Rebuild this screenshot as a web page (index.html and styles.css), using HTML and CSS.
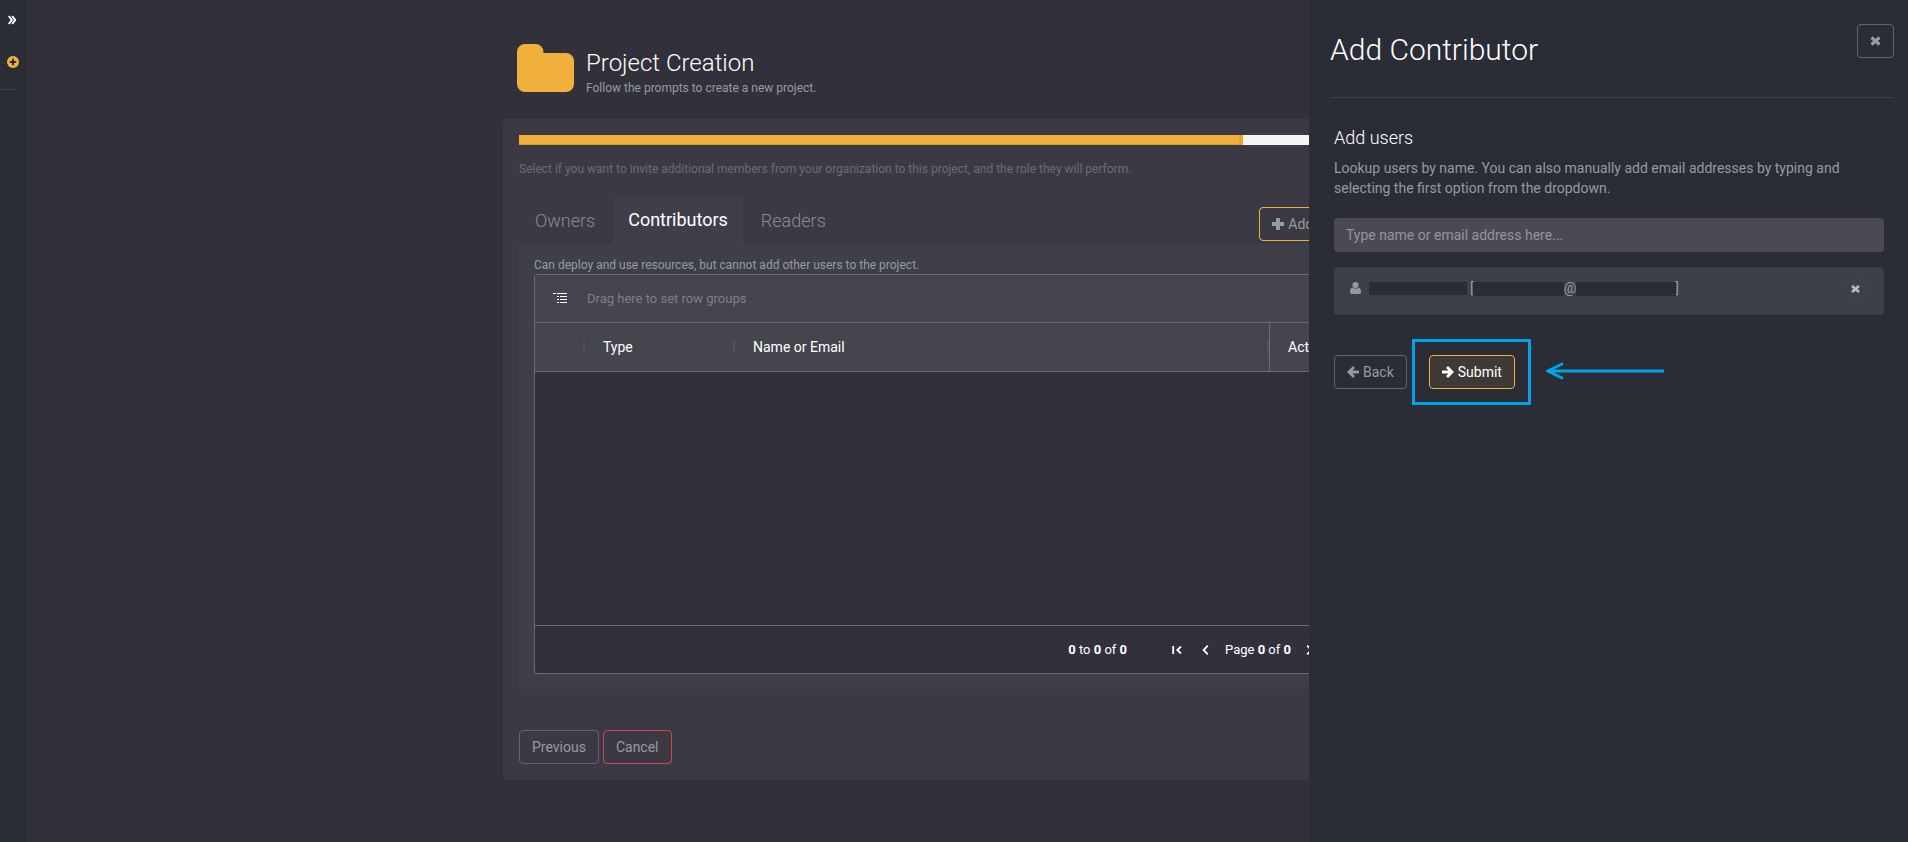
FILE: index.html
```html
<!DOCTYPE html>
<html lang="en">
<head>
<meta charset="utf-8">
<title>Project Creation</title>
<link rel="stylesheet" href="styles.css">
</head>
<body>
<div class="app">
  <nav class="rail" aria-label="Main">
    <button class="rail-btn" type="button" aria-label="Expand menu">
      <svg width="8" height="10" viewBox="0 0 8 10"><path d="M.8 1 3.800 5 .8 9M4.200 1l3 4-3 4" fill="none" stroke="#fff" stroke-width="2"/></svg>
    </button>
    <button class="rail-btn rail-add" type="button" aria-label="New">
      <svg width="12" height="12" viewBox="0 0 12 12"><circle cx="6" cy="6" r="6" fill="#f1b03c"/><path d="M6 2.800v6.400M2.800 6h6.400" stroke="#2a2d35" stroke-width="2"/></svg>
    </button>
    <hr class="rail-line">
  </nav>

  <main class="page">
    <header class="page-head">
      <svg class="folder" width="57" height="48" viewBox="0 0 57 48"><path d="M8 0h10.500a8 8 0 0 1 8 8v1H49a8 8 0 0 1 8 8v23a8 8 0 0 1-8 8H8a8 8 0 0 1-8-8V8a8 8 0 0 1 8-8z" fill="#f1b03c"/></svg>
      <div>
        <h1 class="page-title">Project Creation</h1>
        <p class="small">Follow the prompts to create a new project.</p>
      </div>
    </header>

    <section class="panel">
      <div class="progress" role="progressbar" aria-valuenow="80" aria-valuemin="0" aria-valuemax="100"><div class="progress-bar" style="width:80%"></div></div>
      <p class="small hint">Select if you want to invite additional members from your organization to this project, and the role they will perform.</p>

      <div class="tabs-row">
        <div class="tabs" role="tablist">
          <button class="tab" role="tab" type="button">Owners</button>
          <button class="tab active" role="tab" type="button" aria-selected="true">Contributors</button>
          <button class="tab" role="tab" type="button">Readers</button>
        </div>
        <button class="btn btn-accent" type="button">
          <svg width="12" height="12" viewBox="0 0 12 12"><path d="M6 0v12M0 6h12" stroke="currentColor" stroke-width="4"/></svg>
          Add Contributor
        </button>
      </div>

      <div class="pane" role="tabpanel">
        <p class="small">Can deploy and use resources, but cannot add other users to the project.</p>
        <div class="grid">
          <div class="group-bar">
            <svg width="14" height="11" viewBox="0 0 14 11"><path d="M0 .5h3M4 .5h10M4 3.500h2M7 3.500h7M4 6.500h2M7 6.500h7M4 9.500h2M7 9.500h7" stroke="#fff"/></svg>
            <span>Drag here to set row groups</span>
          </div>
          <table class="grid-table">
            <colgroup><col class="c-check"><col class="c-type"><col><col class="c-act"></colgroup>
            <thead><tr><th></th><th>Type</th><th>Name or Email</th><th class="pinned">Actions</th></tr></thead>
          </table>
          <div class="grid-body"></div>
          <div class="pager">
            <span class="summary"><b>0</b> to <b>0</b> of <b>0</b></span>
            <button class="pg" type="button" aria-label="First page"><svg width="10" height="8" viewBox="0 0 10 8"><path d="M1.200 0v8M9 .5 5.300 4 9 7.500" fill="none" stroke="currentColor" stroke-width="1.800"/></svg></button>
            <button class="pg" type="button" aria-label="Previous page"><svg width="7" height="10" viewBox="0 0 7 10"><path d="M5.800.7 1.600 5l4.200 4.300" fill="none" stroke="currentColor" stroke-width="1.800"/></svg></button>
            <span class="page-no">Page <b>0</b> of <b>0</b></span>
            <button class="pg" type="button" aria-label="Next page"><svg width="7" height="10" viewBox="0 0 7 10"><path d="M1.200.7 5.400 5 1.200 9.300" fill="none" stroke="currentColor" stroke-width="1.800"/></svg></button>
            <button class="pg" type="button" aria-label="Last page"><svg width="10" height="8" viewBox="0 0 10 8"><path d="M8.800 0v8M1 .5 4.700 4 1 7.500" fill="none" stroke="currentColor" stroke-width="1.800"/></svg></button>
          </div>
        </div>
      </div>

      <div class="actions">
        <button class="btn" type="button">Previous</button>
        <button class="btn btn-danger" type="button">Cancel</button>
      </div>
    </section>
  </main>
</div>

<aside class="drawer" aria-label="Add Contributor">
  <header class="drawer-head">
    <h2 class="drawer-title">Add Contributor</h2>
    <button class="btn" type="button" aria-label="Close">
      <svg width="11" height="10" viewBox="0 0 11 10"><path d="M1.500 1.500l8 7M9.500 1.500l-8 7" stroke="currentColor" stroke-width="3.200"/></svg>
    </button>
  </header>
  <form class="drawer-body">
    <label class="field-title" for="user">Add users</label>
    <p class="help">Lookup users by name. You can also manually add email addresses by typing and selecting the first option from the dropdown.</p>
    <input class="text-input" id="user" type="text" placeholder="Type name or email address here...">
    <div class="user-card">
      <svg class="user-icon" width="11" height="12" viewBox="0 0 11 12"><path d="M5.500 0a3 3 0 0 1 0 6.200 3 3 0 0 1 0-6.200zM2.600 5.400a4.200 4.200 0 0 0 5.800 0C10.400 5.600 11 7.500 11 9.700 11 11.200 10.200 12 9 12H2C.8 12 0 11.200 0 9.700c0-2.200.6-4.100 2.600-4.300z" fill="#9398a0"/></svg>
      <span class="mask mask-name"></span><span>[</span><span class="mask mask-local"></span><span>@</span><span class="mask mask-host"></span><span>]</span>
      <button class="remove" type="button" aria-label="Remove user">
        <svg width="9" height="8" viewBox="0 0 9 8"><path d="M1 1l7 6M8 1 1 7" stroke="#b4b7bb" stroke-width="2.800"/></svg>
      </button>
    </div>
    <div class="drawer-actions">
      <button class="btn" type="button">
        <svg width="12" height="12" viewBox="0 0 12 12"><path d="M12 6H2.500M7 1 2 6l5 5" fill="none" stroke="currentColor" stroke-width="2.800"/></svg>
        Back
      </button>
      <div class="submit-wrap">
        <button class="btn btn-submit" type="button">
          <svg width="12" height="12" viewBox="0 0 12 12"><path d="M0 6h9.500M5 1l5 5-5 5" fill="none" stroke="currentColor" stroke-width="2.800"/></svg>
          Submit
        </button>
        <span class="callout-box"></span>
        <svg class="callout-arrow" width="118" height="18" viewBox="0 0 118 18"><path d="M118 9H2M17 1.500 2 9l15 7.500" fill="none" stroke="#00a2e8" stroke-width="3"/></svg>
      </div>
    </div>
  </form>
</aside>
</body>
</html>
```

FILE: styles.css
```css
* { box-sizing: border-box; }

body {
  margin: 0;
  background: #32313b;
  color: #949ba2;
  font: 14px/20px Roboto, "Liberation Sans", sans-serif;
}

h1, h2, p { margin: 0; font-weight: 400; }
button, input { font: inherit; color: inherit; }
button { cursor: pointer; }
svg { display: block; flex: none; }

.app { display: flex; min-height: 100vh; }

.rail { width: 27px; background: #2a2d35; padding-top: 15px; }
.rail-btn { display: block; margin: 0 0 31px 8px; padding: 0; border: 0; background: none; }
.rail-add { margin-left: 7px; margin-bottom: 21px; }
.rail-line { width: 17px; margin: 0; border: 0; border-top: 1px solid #3f424a; }

.page { flex: 1; padding: 44px 24px 60px 32px; max-width: 993px; margin: 0 auto; }
.page-head { display: flex; gap: 12px; padding-left: 14px; height: 75px; }
.page-title { font-size: 24px; line-height: 32px; font-weight: 300; color: #fff; padding-top: 3px; }
.small { font-size: 12px; line-height: 18px; }

.panel { background: #3b3a44; border-radius: 3px; padding: 16px; }
.progress { height: 10px; background: #f5f5f5; }
.progress-bar { height: 10px; background: #f1b03c; border-right: 4px solid #eea526; box-shadow: inset 0 -1px 0 #d69b34; }
.hint { color: #696c76; padding: 15px 0; }

.tabs-row { display: flex; justify-content: space-between; align-items: flex-end; padding-top: 4px; }
.tabs { display: flex; gap: 2px; }
.tab {
  border: 0; background: none; padding: 0 16px; height: 47px;
  font-size: 18px; font-weight: 300; border-radius: 3px 3px 0 0; color: #878b94;
}
.tab.active { padding: 0 15px 2px; background: #3f3f4a; color: #fff; font-weight: 400; }

.btn {
  display: inline-flex; align-items: center; gap: 4px; height: 34px; padding: 0 12px;
  border: 1px solid #616178; border-radius: 4px; background: transparent; color: #949ba2;
}
.btn-accent { margin: 0 24px 3px 0; border-color: #f1b03c; }
.btn-danger { border-color: #cf4b4b; }

.pane { background: #3f3f4a; padding: 12px 15px 15px; }
.grid { border: 1px solid #6b6b71; border-radius: 3px; overflow: hidden; background: #32313b; }
.group-bar {
  display: flex; align-items: center; gap: 20px; height: 48px; padding-left: 18px;
  background: #45454e; border-bottom: 1px solid #6b6b71; color: #7d7f87; font-size: 13px;
}
.grid-table { width: 100%; table-layout: fixed; border-collapse: separate; border-spacing: 0; background: #45454e; }
.grid-table th {
  position: relative; height: 49px; padding: 0 18px; text-align: left;
  font-weight: 400; color: #fff; border-bottom: 1px solid #6b6b71;
}
.grid-table th:not(.pinned)::after {
  content: ""; position: absolute; right: 0; top: 17px; width: 2px; height: 14px; background: #505052;
}
.grid-table .pinned { border-left: 1px solid #6b6b71; }
.c-check { width: 50px; }
.c-type { width: 150px; }
.c-act { width: 139px; }
.grid-body { height: 253px; }
.pager {
  display: flex; align-items: center; justify-content: flex-end; height: 48px; padding-right: 57px;
  border-top: 1px solid #6b6b71; color: #fff; font-size: 13px;
}
.pager b { font-weight: 700; }
.summary { margin-right: 36px; }
.page-no { margin: 0 4px 0 6px; }
.pg { display: flex; align-items: center; justify-content: center; width: 28px; height: 28px; padding: 0; border: 0; background: none; }

.actions { display: flex; gap: 4px; padding-top: 41px; }

.drawer { position: fixed; top: 0; right: 0; bottom: 0; width: 599px; padding: 24px 14px 24px 21px; background: #2a2d35; }
.drawer-head { display: flex; align-items: flex-start; justify-content: space-between; height: 74px; border-bottom: 1px solid #41434b; }
.drawer-title { font-size: 30px; line-height: 52px; font-weight: 300; color: #fff; }
.drawer-body { padding: 30px 10px 0 4px; }
.field-title { display: block; font-size: 18px; line-height: 20px; font-weight: 300; color: #fff; padding-bottom: 10px; }
.text-input {
  display: block; width: 100%; height: 34px; margin-top: 20px; padding: 0 12px;
  border: 0; border-radius: 4px; background: #4b4a54;
}
.text-input::placeholder { color: #959595; opacity: 1; }
.user-card {
  display: flex; align-items: flex-start; height: 48px; margin-top: 15px; padding: 10px 15px;
  border: 1px solid #393c44; border-radius: 3px; background: #3e4048;
}
.user-icon { margin: 4px 8px 0 0; }
.mask { position: relative; height: 14px; margin-top: 4px; background: #2a2d35; }
.mask-name { width: 98px; margin-right: 3px; height: 13px; }
.mask-local { width: 91px; margin-left: -1px; }
.mask-host { width: 100px; margin-right: -1px; }
.remove {
  display: flex; align-items: center; justify-content: center; width: 25px; height: 21px; margin-left: auto; padding: 0;
  border: 1px solid #43454d; border-radius: 10px; background: transparent;
}
.drawer-actions { display: flex; gap: 22px; padding-top: 40px; }
.submit-wrap { position: relative; }
.btn-submit { border-color: #f1b03c; background: #3f3935; color: #fff; }
.callout-box { position: absolute; inset: -16px -16px -16px -17px; border: 3px solid #00a2e8; pointer-events: none; }
.callout-arrow { position: absolute; left: 117px; top: 7px; }
```
